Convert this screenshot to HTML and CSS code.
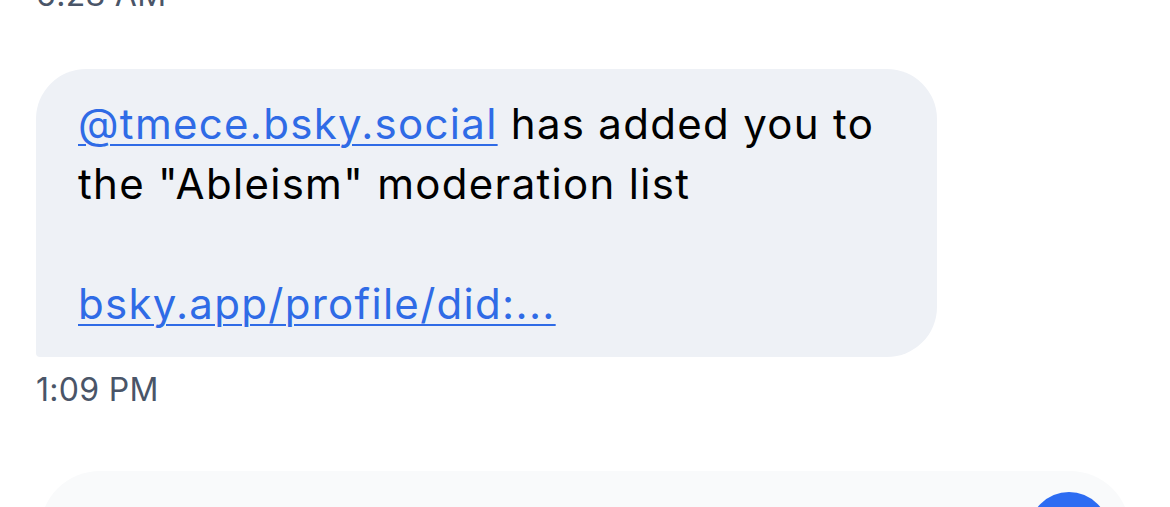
FILE: index.html
```html
<!DOCTYPE html>
<html lang="en">
<head>
<meta charset="utf-8">
<title>Messages</title>
<link rel="stylesheet" href="styles.css">
</head>
<body>
<div class="screen">
  <div class="feed">
    <div class="time time-top">6:28 AM</div>
    <div class="bubble">
      <p class="msg"><a class="link" href="#">@tmece.bsky.social</a> has added you to the "Ableism" moderation list<br><br><a class="link" href="#">bsky.app/profile/did:...</a></p>
    </div>
    <div class="time time-bottom">1:09 PM</div>
  </div>
  <div class="composer">
    <div class="composer-field"></div>
    <div class="send"></div>
  </div>
</div>
</body>
</html>
```

FILE: styles.css
```css
html, body {
  margin: 0;
  padding: 0;
  background: #ffffff;
}
body {
  font-family: Inter, "Noto Sans", sans-serif;
  width: 1170px;
  height: 507px;
  overflow: hidden;
}
.screen {
  display: flex;
  flex-direction: column;
}
.feed {
  display: flex;
  flex-direction: column;
  align-items: flex-start;
  padding: 0 36px;
  margin-top: -25px;
}
.time {
  font-size: 32px;
  line-height: 40px;
  color: #4a5568;
  letter-spacing: 0.3px;
}
.bubble {
  margin-top: 54px;
  width: 901px;
  box-sizing: border-box;
  background: #eef1f6;
  border-radius: 50px 50px 50px 4px;
  padding: 25px 42px 23px 42px;
}
.msg {
  margin: 0;
  font-size: 42px;
  line-height: 60px;
  color: #000000;
  letter-spacing: 1.3px;
}
.link {
  color: #2f6be6;
  text-decoration: underline;
  text-decoration-thickness: 2px;
  text-underline-offset: 5px;
}
.time-bottom {
  margin-top: 13px;
}
.composer {
  margin: 61px 40px 0 40px;
  background: #f9fafb;
  border-radius: 60px;
  padding: 21px;
  display: flex;
  align-items: center;
  gap: 20px;
}
.composer-field {
  flex: 1;
  height: 80px;
}
.send {
  width: 80px;
  height: 80px;
  border-radius: 50%;
  background: #2d6cf2;
  flex: none;
}
```
